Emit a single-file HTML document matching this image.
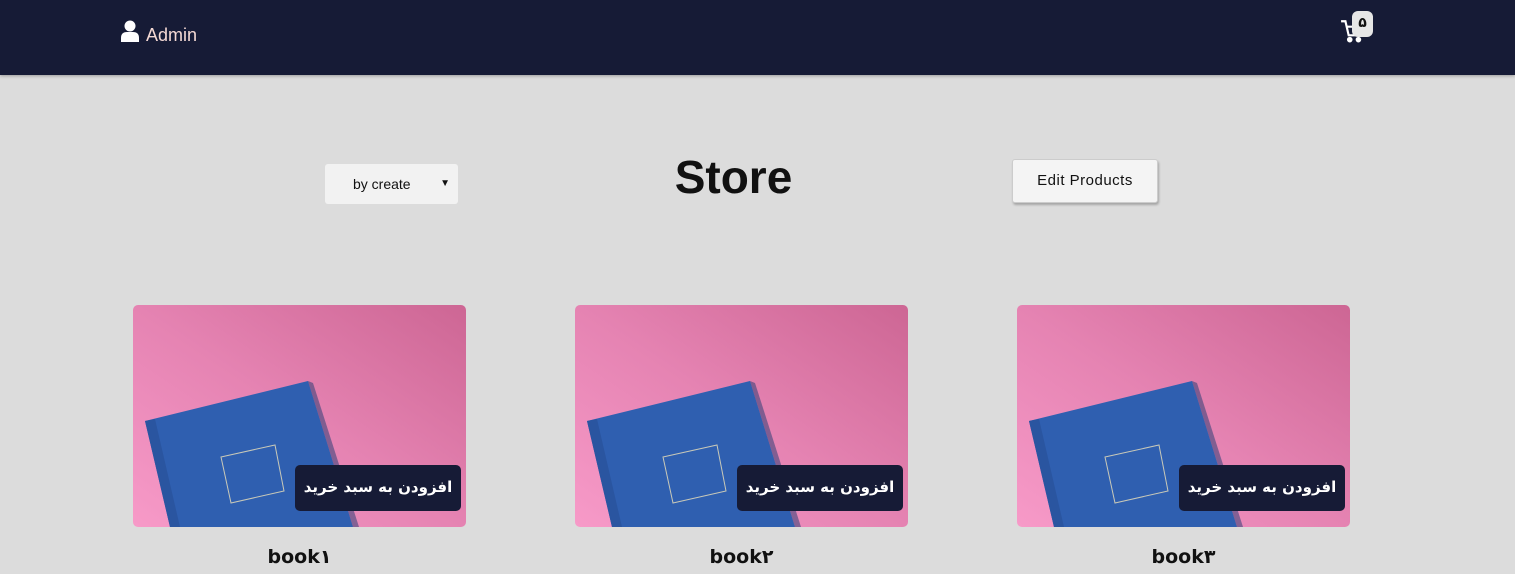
<!DOCTYPE html>
<html><head><meta charset="utf-8"><style>
*{margin:0;padding:0;box-sizing:border-box}
body{width:1515px;height:574px;overflow:hidden;background:#dcdcdc;font-family:"Liberation Sans","Noto Sans CJK SC",sans-serif;position:relative}
.nav{position:absolute;left:0;top:0;width:1515px;height:75px;background:#161b36;box-shadow:0 1px 3px rgba(0,0,0,.3)}
.admin{position:absolute;left:146px;top:25px;color:#f4d9d4;font-size:18px}
.badge{position:absolute;left:1352px;top:11px;width:21px;height:26px;background:#e6e6e6;border-radius:6px;color:#111;font-size:14px;font-weight:bold;text-align:center;line-height:24px;font-family:"DejaVu Sans",sans-serif}
h1{position:absolute;left:0;width:1467px;text-align:center;top:150px;font-size:46px;font-weight:bold;color:#111;font-family:"Liberation Sans",sans-serif}
.sel{position:absolute;left:325px;top:164px;width:133px;height:40px;background:#f2f2f2;border-radius:3px;font-size:14px;color:#111;line-height:40px;padding-left:28px}
.sel span{position:absolute;right:8px;top:0;font-size:10px}
.btn{position:absolute;left:1012px;top:159px;width:146px;height:44px;background:#f4f4f4;border:1px solid #ccc;border-radius:3px;box-shadow:1px 2px 2px rgba(0,0,0,.25);font-size:15px;text-align:center;line-height:42px;color:#111;letter-spacing:.5px}
.card{position:absolute;top:305px;width:333px;height:222px;border-radius:5px;overflow:hidden}
.add{position:absolute;right:5px;top:160px;width:166px;height:46px;background:#161b36;border-radius:5px;color:#fff;font-size:15px;font-weight:bold;text-align:center;line-height:44px;font-family:"DejaVu Sans",sans-serif;white-space:nowrap;direction:rtl}
.t{position:absolute;top:546px;width:333px;text-align:center;font-size:19px;font-weight:bold;color:#111;font-family:"DejaVu Sans",sans-serif}
</style></head><body>
<div class="nav">
<svg style="position:absolute;left:121px;top:20px" width="18" height="22" viewBox="0 0 18 22"><circle cx="9" cy="6" r="5.5" fill="#fff"/><path d="M0 22V18Q0 12 6 12H12Q18 12 18 18V22Z" fill="#fff"/></svg>
<div class="admin">Admin</div>
<svg style="position:absolute;left:1340px;top:18px" width="26" height="26" viewBox="0 0 24 24" fill="none" stroke="#fff" stroke-width="2"><path d="M1 3H5L8 16H19L21 8H7"/><circle cx="9" cy="20" r="1.6" fill="#fff"/><circle cx="17" cy="20" r="1.6" fill="#fff"/></svg>
<div class="badge">۵</div>
</div>
<div class="sel">by create<span>▼</span></div>
<h1>Store</h1>
<div class="btn">Edit Products</div>
<svg width="0" height="0" style="position:absolute"><defs><linearGradient id="g" x1="0" y1="1" x2="1" y2="0"><stop offset="0" stop-color="#f79ac8"/><stop offset=".5" stop-color="#e583b2"/><stop offset="1" stop-color="#cd6694"/></linearGradient></defs></svg>
<div class="card" style="left:133px"><svg width="333" height="222"><rect width="333" height="222" fill="url(#g)"/><polygon points="12,116 175,76 220,222 37,222" fill="#2f5fb0"/><polygon points="175,76 180,78 226,222 220,222" fill="#1d3870" opacity=".5"/><polygon points="12,116 22,114 47,222 37,222" fill="#2a55a0"/><polygon points="88,152 142,140 151,186 98,198" fill="none" stroke="#c9c9b8" stroke-width="1"/></svg><div class="add">افزودن به سبد خرید</div></div>
<div class="card" style="left:575px"><svg width="333" height="222"><rect width="333" height="222" fill="url(#g)"/><polygon points="12,116 175,76 220,222 37,222" fill="#2f5fb0"/><polygon points="175,76 180,78 226,222 220,222" fill="#1d3870" opacity=".5"/><polygon points="12,116 22,114 47,222 37,222" fill="#2a55a0"/><polygon points="88,152 142,140 151,186 98,198" fill="none" stroke="#c9c9b8" stroke-width="1"/></svg><div class="add">افزودن به سبد خرید</div></div>
<div class="card" style="left:1017px"><svg width="333" height="222"><rect width="333" height="222" fill="url(#g)"/><polygon points="12,116 175,76 220,222 37,222" fill="#2f5fb0"/><polygon points="175,76 180,78 226,222 220,222" fill="#1d3870" opacity=".5"/><polygon points="12,116 22,114 47,222 37,222" fill="#2a55a0"/><polygon points="88,152 142,140 151,186 98,198" fill="none" stroke="#c9c9b8" stroke-width="1"/></svg><div class="add">افزودن به سبد خرید</div></div>
<div class="t" style="left:133px">book۱</div>
<div class="t" style="left:575px">book۲</div>
<div class="t" style="left:1017px">book۳</div>
</body></html>
